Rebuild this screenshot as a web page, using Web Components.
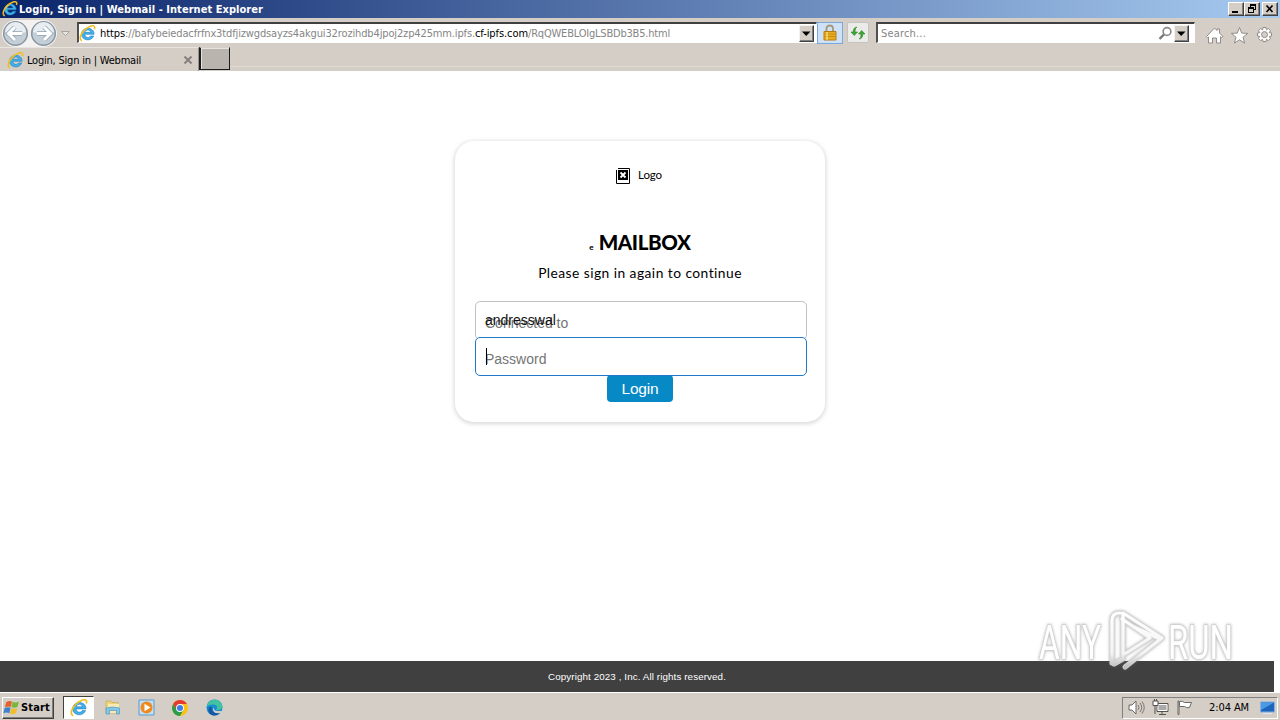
<!DOCTYPE html>
<html lang="en">
<head>
<meta charset="utf-8">
<title>Login, Sign in | Webmail</title>
<style>
  html, body {
    margin: 0;
    height: 100%;
    overflow: hidden;
  }

  body {
    width: 1280px;
    height: 720px;
    display: flex;
    flex-direction: column;
    background: #fff;
    --face: #d4cec7;
    --ui-font: "DejaVu Sans Condensed", "DejaVu Sans", sans-serif;
  }
</style>
</head>
<body>
<title-bar>Login, Sign in | Webmail - Internet Explorer</title-bar>
<nav-bar></nav-bar>
<tab-strip>Login, Sign in | Webmail</tab-strip>
<web-page>
  <login-card>
    <text-field value="andresswal" label="Connected to"></text-field>
    <text-field label="Password" focused></text-field>
  </login-card>
</web-page>
<task-bar></task-bar>
<any-watermark></any-watermark>

<template id="title-bar">
  <style>
    :host {
      display: flex;
      align-items: center;
      flex: none;
      height: 18px;
      box-sizing: border-box;
      padding: 0 2px 1px;
      background: linear-gradient(90deg, #0a246a, #a6caf0);
      color: #fff;
      font: bold 11px var(--ui-font);
    }
    .title { flex: 1; padding: 2px 0 0 1px; }
    .buttons { display: flex; padding-top: 1px; }
    button {
      width: 16px;
      height: 14px;
      padding: 0;
      border: 1px solid;
      border-color: #fff #404040 #404040 #fff;
      box-shadow: inset -1px -1px #808080;
      background: var(--face);
      display: flex;
    }
    button:last-child { margin-left: 2px; }
  </style>
  <ui-icon name="ie" size="16"></ui-icon>
  <div class="title"><fit-text width="244"><slot></slot></fit-text></div>
  <div class="buttons">
    <button><ui-icon name="minimize" size="14" height="12"></ui-icon></button>
    <button><ui-icon name="restore" size="14" height="12"></ui-icon></button>
    <button><ui-icon name="close" size="14" height="12"></ui-icon></button>
  </div>
</template>

<template id="nav-bar">
  <style>
    :host {
      display: flex;
      align-items: flex-start;
      flex: none;
      height: 29px;
      box-sizing: border-box;
      padding: 2px 6px 0 2px;
      background: var(--face);
      font: 11px var(--ui-font);
      color: #858585;
    }
    .arrows {
      display: flex;
      height: 27px;
      border-radius: 14px;
      background: #f3f2f0;
    }
    .chevron { padding: 9px 6px 0 4px; }
    .box {
      display: flex;
      align-items: center;
      box-sizing: border-box;
      height: 21px;
      margin-top: 2px;
      background: #fff;
      border: 1px solid #fff;
      border-top: 2px solid #404040;
      border-left: 2px solid #505050;
    }
    .address { width: 740px; margin-left: 1px; }
    .address ui-icon { margin: 0 4px 0 0; }
    .url { flex: 1; display: flex; padding-top: 1px; }
    b { font-weight: normal; color: #000; }
    .drop {
      width: 15px;
      height: 17px;
      box-sizing: border-box;
      border: 1px solid;
      border-color: #f4f2ee #404040 #404040 #f4f2ee;
      box-shadow: inset -1px -1px #808080;
      background: var(--face);
      display: flex;
    }
    .address .drop { margin-right: 2px; }
    .tool {
      display: flex;
      align-items: center;
      justify-content: center;
      box-sizing: border-box;
      width: 22px;
      height: 21px;
      margin: 2px 0 0 7px;
      border: 1px solid #c4c3bf;
      border-radius: 2px;
      background: #ebebe9;
    }
    .lock {
      width: 26px;
      height: 22px;
      margin-left: 0;
      border-color: #78a8dc;
      border-radius: 0;
      background: #cfe1f6;
    }
    .search { width: 319px; margin-left: 7px; }
    .search .hint { flex: 1; padding: 1px 0 0 3px; }
    .search .drop { margin-right: 5px; margin-left: 1px; }
    .commands {
      display: flex;
      flex: 1;
      justify-content: flex-end;
      gap: 6px;
      padding-top: 6px;
    }
  </style>
  <div class="arrows">
    <ui-icon name="back" size="27"></ui-icon>
    <ui-icon name="forward" size="28" height="27"></ui-icon>
  </div>
  <div class="chevron"><ui-icon name="chevron" size="9"></ui-icon></div>
  <div class="box address">
    <ui-icon name="ie" size="17"></ui-icon>
    <div class="url">
      <fit-text width="25"><b>https</b></fit-text><fit-text width="350">://bafybeiedacfrfnx3tdfjizwgdsayzs4akgui32rozihdb4jpoj2zp425mm.ipfs.</fit-text><fit-text width="53"><b>cf-ipfs.com</b></fit-text><fit-text width="142">/RqQWEBLOIgLSBDb3B5.html</fit-text>
    </div>
    <div class="drop"><ui-icon name="down" size="13" height="15"></ui-icon></div>
  </div>
  <div class="tool lock"><ui-icon name="lock" size="16" height="18"></ui-icon></div>
  <div class="tool" style="margin-left: 4px"><ui-icon name="refresh" size="16"></ui-icon></div>
  <div class="box search">
    <div class="hint"><fit-text width="45">Search...</fit-text></div>
    <ui-icon name="magnifier" size="15"></ui-icon>
    <div class="drop"><ui-icon name="down" size="13" height="15"></ui-icon></div>
  </div>
  <div class="commands">
    <ui-icon name="home" size="19"></ui-icon>
    <ui-icon name="star" size="19"></ui-icon>
    <ui-icon name="gear" size="19"></ui-icon>
  </div>
</template>

<template id="tab-strip">
  <style>
    :host {
      display: flex;
      flex: none;
      height: 24px;
      background: var(--face);
      font: 11px var(--ui-font);
      color: #000;
    }
    .tab {
      display: flex;
      align-items: center;
      box-sizing: border-box;
      width: 199px;
      padding: 1px 5px 0 7px;
      gap: 3px;
      border-top: 1px solid #e8e5e1;
      border-right: 1px solid #9a948e;
    }
    .label { flex: 1; }
    .new {
      box-sizing: border-box;
      width: 31px;
      height: 23px;
      border: solid #1c1c1c;
      border-width: 1px 1px 1px 2px;
      border-top-color: #d4d0c8;
      box-shadow: inset 1px 1px #e7e4df;
      background: #bab4af;
    }
    .rest { flex: 1; display: flex; align-items: flex-end; }
    .rest::after {
      content: "";
      flex: 1;
      height: 4px;
      border-top: 1px solid #dedad5;
    }
  </style>
  <div class="tab">
    <ui-icon name="ie" size="17"></ui-icon>
    <div class="label"><fit-text width="114"><slot></slot></fit-text></div>
    <ui-icon name="tabclose" size="10"></ui-icon>
  </div>
  <div class="new"></div>
  <div class="rest"></div>
</template>

<template id="web-page">
  <style>
    :host {
      display: flex;
      flex-direction: column;
      flex: 1;
      min-height: 0;
      background: #fff;
    }
    main {
      display: flex;
      justify-content: center;
      align-items: flex-start;
      flex: 1;
      padding-top: 70px;
    }
    footer {
      width: 1274px;
      height: 31px;
      line-height: 31px;
      text-align: center;
      background: #404040;
      color: #fff;
      font-family: "Liberation Sans", sans-serif;
      font-size: 9.8px;
    }
  </style>
  <main><slot></slot></main>
  <footer><fit-text width="178">Copyright 2023 , Inc. All rights reserved.</fit-text></footer>
</template>

<template id="login-card">
  <style>
    :host {
      display: flex;
      flex-direction: column;
      align-items: center;
      box-sizing: border-box;
      width: 370px;
      height: 281px;
      border-radius: 19px;
      box-shadow: 0 1px 4px 1px rgba(0, 0, 0, .15);
      background: #fff;
      color: #000;
      font-family: Lato, "Open Sans", sans-serif;
    }
    .logo {
      display: flex;
      align-items: center;
      gap: 7px;
      height: 17px;
      margin: 26px 2px 0 0;
      font-size: 11.5px;
    }
    .logo fit-text { padding-bottom: 3px; }
    h1 {
      display: flex;
      align-items: baseline;
      gap: 5px;
      margin: 46px 0 0;
      height: 24px;
      font-size: 20.5px;
      font-weight: 900;
      line-height: 24px;
    }
    small { font-size: 8px; }
    p {
      margin: 10px 0 19px;
      font-size: 13.8px;
      line-height: 18px;
    }
    button {
      width: 66px;
      height: 27px;
      margin-top: -1px;
      padding: 1px 0 0;
      border: 0;
      border-radius: 4px;
      background: #0689c4;
      color: #fff;
      font: 15.5px "Liberation Sans", sans-serif;
    }
  </style>
  <div class="logo"><ui-icon name="broken" size="15" height="17"></ui-icon><fit-text width="24">Logo</fit-text></div>
  <h1><small>e</small><fit-text width="92">MAILBOX</fit-text></h1>
  <p><fit-text width="204">Please sign in again to continue</fit-text></p>
  <slot></slot>
  <button><fit-text width="37">Login</fit-text></button>
</template>

<template id="text-field">
  <style>
    :host {
      display: block;
      position: relative;
      box-sizing: border-box;
      width: 332px;
      height: 39px;
      margin-left: 2px;
      border: 1px solid #c2c2c2;
      border-radius: 5px;
      background: #fff;
      font: 14px/16px "Liberation Sans", sans-serif;
    }
    :host([focused]) {
      margin-top: -3px;
      border-color: #1f78c8;
    }
    span { position: absolute; left: 9px; white-space: nowrap; }
    .label { top: 13px; color: #757575; }
    .value { top: 10px; color: #111; }
    :host([focused]) .caret {
      position: absolute;
      left: 10px;
      top: 10px;
      width: 1px;
      height: 17px;
      background: #000;
    }
  </style>
  <span class="label"></span>
  <span class="value"></span>
  <div class="caret"></div>
</template>

<template id="task-bar">
  <style>
    :host {
      display: flex;
      align-items: center;
      flex: none;
      box-sizing: border-box;
      height: 28px;
      padding: 2px 2px 0 2px;
      border-top: 1px solid #fff;
      background: var(--face);
      color: #000;
      font: 11px var(--ui-font);
    }
    .start {
      display: flex;
      align-items: center;
      box-sizing: border-box;
      width: 52px;
      height: 22px;
      gap: 1px;
      border: 1px solid;
      border-color: #fff #404040 #404040 #fff;
      box-shadow: inset -1px -1px #808080;
      font-weight: bold;
    }
    .apps { display: flex; flex: 1; align-items: center; padding-left: 9px; }
    .app {
      display: flex;
      align-items: center;
      justify-content: center;
      box-sizing: border-box;
      width: 34px;
      height: 23px;
    }
    .active {
      width: 31px;
      background: #fff;
      border: 1px solid;
      border-color: #404040 #fff #fff #404040;
    }
    .tray {
      display: flex;
      align-items: center;
      box-sizing: border-box;
      width: 156px;
      height: 22px;
      padding: 0 1px 0 5px;
      gap: 7px;
      border: 1px solid;
      border-color: #808080 #fff #fff #808080;
    }
    .clock { flex: 1; padding-left: 9px; }
  </style>
  <div class="start"><ui-icon name="windows" size="17"></ui-icon><fit-text width="29">Start</fit-text></div>
  <div class="apps">
    <div class="app active"><ui-icon name="ie" size="18"></ui-icon></div>
    <div class="app" style="margin-left: 1px"><ui-icon name="folder" size="17"></ui-icon></div>
    <div class="app"><ui-icon name="player" size="17"></ui-icon></div>
    <div class="app"><ui-icon name="chrome" size="16"></ui-icon></div>
    <div class="app"><ui-icon name="edge" size="17"></ui-icon></div>
  </div>
  <div class="tray">
    <ui-icon name="speaker" size="17"></ui-icon>
    <ui-icon name="network" size="17"></ui-icon>
    <ui-icon name="flag" size="17"></ui-icon>
    <div class="clock"><fit-text width="40">2:04 AM</fit-text></div>
    <ui-icon name="desktop" size="17"></ui-icon>
  </div>
</template>

<template id="any-watermark">
  <style>
    :host {
      position: absolute;
      left: 1030px;
      top: 602px;
      width: 240px;
      height: 76px;
    }
    svg { display: block; }
    text {
      font: 49px Roboto, sans-serif;
      fill: #fff;
      stroke: #cfcfcf;
      stroke-width: 1.6;
      paint-order: stroke;
    }
  </style>
  <svg width="240" height="76" viewBox="0 0 240 76">
    <defs>
      <filter id="soft" x="-10%" y="-20%" width="120%" height="140%">
        <feDropShadow dx="0" dy="0" stdDeviation="1.8" flood-color="#777" flood-opacity=".6"/>
      </filter>
      <linearGradient id="fade" gradientUnits="userSpaceOnUse" x1="0" y1="8" x2="0" y2="70">
        <stop offset="0" stop-color="#fff"/>
        <stop offset=".7" stop-color="#f4f4f4"/>
        <stop offset="1" stop-color="#aaa"/>
      </linearGradient>
      <path id="play" d="M82 61V18q0-7 8-7M84 62l9-5M93 54V11L132 36 95 65M92 17L120 36 93 53M104 25l24 11"/>
    </defs>
    <g filter="url(#soft)">
      <text x="9" y="57" textLength="62" lengthAdjust="spacingAndGlyphs">ANY</text>
      <text x="138" y="57" textLength="65" lengthAdjust="spacingAndGlyphs">RUN</text>
      <g fill="none" stroke-linejoin="round" stroke-linecap="round">
        <use href="#play" stroke="#d2d2d2" stroke-width="5"/>
        <use href="#play" stroke="url(#fade)" stroke-width="3.2"/>
      </g>
    </g>
  </svg>
</template>

<script>
(function(){
  // Each entry is [viewBox, markup]
  var icons = {
    ie: ['0 0 16 16', '<path d="M14.2 8.8H5.5c.1 3.2 4.1 3.9 5.3 1.5h3.1C11.600 16 2.400 15 2.400 8.500c0-6.800 11.800-7.700 11.800.3zM5.600 6.900h5.300C10.600 4 6 4 5.600 6.900z" fill="#42b0ea" stroke="#1978bd" stroke-width=".5"/><path d="M2.800 14.900C-1.500 13 3.500 4.500 9 2c4.500-2.500 6.600-1.300 5.400 2" fill="none" stroke="#f0bd20" stroke-width="1.500"/>'],
    minimize: ['0 0 14 12', '<path d="M3 8h6v2H3z"/>'],
    restore: ['0 0 14 12', '<path d="M5 1h6v6H9V6h1V3H6v1H5zM3 4h6v6H3zm1 2v3h4V6z" fill-rule="evenodd"/>'],
    close: ['0 0 14 12', '<path d="M3.500 2.500l6 6.500M9.500 2.500L3.500 9" stroke="#000" stroke-width="1.700"/>'],
    back: ['0 0 27 27', '<circle cx="13.500" cy="13.500" r="11.800" fill="#c4ced6" stroke="#8995a0" stroke-width="1.500"/><path d="M3 12a10.500 10 0 0 1 21 0q-10 4-21 0z" fill="#e7edf1"/><path d="M13 7l-6.500 6.500L13 20M7 13.500h13" fill="none" stroke="#8fa2b2" stroke-width="4.500"/><path d="M13 7l-6.500 6.500L13 20M7 13.500h13" fill="none" stroke="#fff" stroke-width="3"/>'],
    forward: ['0 0 28 27', '<circle cx="14.500" cy="13.500" r="11.800" fill="#c4ced6" stroke="#8995a0" stroke-width="1.500"/><path d="M4 12a10.500 10 0 0 1 21 0q-10 4-21 0z" fill="#e7edf1"/><path d="M15 7l6.500 6.500L15 20M21 13.500H8" fill="none" stroke="#8fa2b2" stroke-width="4.500"/><path d="M15 7l6.500 6.500L15 20M21 13.500H8" fill="none" stroke="#fff" stroke-width="3"/>'],
    chevron: ['0 0 9 9', '<path d="M.5 2.500h8l-4 4z" fill="#e9e7e4" stroke="#aaa5a0"/>'],
    down: ['0 0 13 15', '<path d="M2 5.500h8.500L6.200 10z"/>'],
    lock: ['0 0 16 18', '<path d="M4.500 8V4.500C4.500.5 11 .5 11 4.500V8" fill="none" stroke="#a49a78" stroke-width="1.800"/><path d="M2 7.500h12V16H2z" fill="#e7ae25" stroke="#b67d0e"/><path d="M2.500 10h11M2.500 12.500h11" stroke="#c78c14"/><path d="M5 8v8" stroke="#f9d864" stroke-width="1.500"/>'],
    refresh: ['0 0 16 16', '<path d="M7 2q-2 1-2 4v1h2.500L4.300 10.500 1 7h2.300Q3 2.500 7 2zM9 14q2-1 2-4V9H8.500l3.200-3.500L15 9h-2.300Q13 13.500 9 14z" fill="#3aa833" stroke="#2b8426" stroke-width=".6"/>'],
    magnifier: ['0 0 15 15', '<circle cx="9" cy="5.500" r="3.900" fill="#fff" stroke="#888" stroke-width="1.600"/><path d="M6 8.500l-4.500 4.300" stroke="#777" stroke-width="2.400"/>'],
    home: ['0 0 19 19', '<path d="M1.500 10.500L9.500 2l2.500 2.500V3h2.500v4L18 10.500l-1.500 1-1-.8V17h-4v-5h-4v5h-4v-6l-1 .7z" fill="#fff" stroke="#918c88"/>'],
    star: ['0 0 19 19', '<path d="M9.500 1.500l2.200 5.600 6 .3-4.700 3.800 1.600 5.900-5.100-3.300-5.100 3.300L6 11.200 1.300 7.400l6-.3z" fill="#fff" stroke="#918c88"/>'],
    gear: ['0 0 19 19', '<path d="M8 1.500h3l.4 2.300 1.900-1.300 2.200 2.200-1.300 1.900 2.300.4v3l-2.300.5 1.300 1.900-2.200 2.200-1.900-1.300-.4 2.300H8l-.4-2.300-1.900 1.300-2.200-2.200 1.300-1.900-2.300-.5V7l2.300-.4-1.300-1.900 2.200-2.200 1.900 1.300z" fill="#fff" stroke="#918c88"/><circle cx="9.500" cy="8.600" r="3" fill="#d4cec7" stroke="#918c88"/>'],
    tabclose: ['0 0 10 10', '<path d="M1.500 1.500l7 7M8.500 1.500l-7 7" stroke="#85807b" stroke-width="2"/>'],
    broken: ['0 0 15 17', '<path d="M.5 3V16.500h13V1.500H2" fill="#fff" stroke="#000"/><path d="M2 3h10v10H2z"/><path d="M4.500 5.500l5 5M9.500 5.500l-5 5" stroke="#fff" stroke-width="1.800"/>'],
    windows: ['0 0 16 16', '<path d="M3 3q3-2 5.500-.7L7.300 7.500Q5 6.500 1.800 7.800z" fill="#e4632c"/><path d="M9 2.700q3 1.300 6-.4l-1.300 5q-3 1.500-5.800.4z" fill="#7ab63d"/><path d="M1.600 8.500q3-1.300 5.500-.2L6 13.300Q3 12 .3 13.500z" fill="#3c83cf"/><path d="M7.700 8.700q3 1.200 5.800-.3l-1.300 5q-3 1.500-5.700.3z" fill="#f2be2b"/>'],
    folder: ['0 0 17 17', '<path d="M2 2h5l1 1.500h6V14H2z" fill="#ecd37c" stroke="#c9a94f" stroke-width=".7"/><path d="M4 5h11v9H4z" fill="#f8eab0"/><path d="M2 9q6.500-2 13.500 0v6h-3v-3.500h-7V15H2z" fill="#83c5e3" stroke="#4d9cc5" stroke-width=".7"/>'],
    player: ['0 0 17 17', '<path d="M1 1h15v15H1z" fill="#c3dff4" stroke="#5b9bd0"/><circle cx="8.500" cy="8.500" r="6" fill="#ee8a1d"/><path d="M6.500 4.800v7.400l6-3.700z" fill="#fff"/>'],
    chrome: ['0 0 16 16', '<circle cx="8" cy="8" r="8" fill="#fbc116"/><path d="M1.100 4A8 8 0 0 1 14.900 4H8L4.500 10z" fill="#e23c30"/><path d="M1.100 4A8 8 0 0 0 8 16l3.500-6H4.600z" fill="#2a9d4b"/><circle cx="8" cy="8" r="3.900" fill="#fff"/><circle cx="8" cy="8" r="3" fill="#3c7de6"/>'],
    edge: ['0 0 17 17', '<circle cx="8.500" cy="8.500" r="8" fill="#168bd2"/><path d="M.8 7.500C2-1.500 16-1.500 16.500 7.500c.3 3-3.500 4.300-6.500 3 2.500-2 .5-5-3-5-3 0-5 1-6.200 2z" fill="#43c1a0"/><path d="M6 8.500c-1 4 3.500 6.500 8.500 4.500-4 6.500-13 3-12-3 .3-2 2-3 3.500-1.500z" fill="#1459a5"/><path d="M8 8q-1 4 4 4h4l-1 2q-8 1.500-8-4z" fill="#d4cec7"/>'],
    speaker: ['0 0 17 17', '<path d="M1 6h3l4-4v13l-4-4H1z" fill="#fff" stroke="#6b6762"/><path d="M10 6q2 2.500 0 5M12 4q3.500 4.500 0 9M14 2.500q4.500 6 0 12" fill="none" stroke="#77736e"/>'],
    network: ['0 0 17 17', '<path d="M5 4.500h11v8H5z" fill="#aaa" stroke="#56524e"/><path d="M6 5.500h9v6H6z" fill="none" stroke="#fff"/><path d="M10 13v2M7 15.500h7M3 6v9" stroke="#56524e"/><path d="M1 2h5v4.500H1zM2.500 0v2M4.500 0v2" fill="#fff" stroke="#56524e"/>'],
    flag: ['0 0 17 17', '<path d="M2 2h1v13.500H2z" fill="#fff" stroke="#6b6762"/><path d="M3.500 2.500q3-1 5 1h7l-2 5q-3 1-5-1h-5z" fill="#fff" stroke="#6b6762"/>'],
    desktop: ['0 0 17 17', '<path d="M1.500 3h14v10h-14z" fill="#1d64bc" stroke="#8bb0da"/><path d="M2 3.500h13L2 11z" fill="#4b9ae5"/><path d="M4 14.500h9" stroke="#dde8f5"/>']
  };

  // Plain elements only stamp their template
  function define(name, connected) {
    var template = document.getElementById(name);
    customElements.define(name, class extends HTMLElement {
      constructor() {
        super();
        this.attachShadow({ mode: 'open' });
        this.shadowRoot.appendChild(document.importNode(template.content, true));
      }

      connectedCallback() {
        if(connected) connected.call(this, this.shadowRoot);
      }
    });
  }

  class UiIcon extends HTMLElement {
    constructor() {
      super();
      this.attachShadow({ mode: 'open' });
    }

    connectedCallback() {
      var icon = icons[this.getAttribute('name')];
      var width = this.getAttribute('size');
      var height = this.getAttribute('height') || width;
      this.shadowRoot.innerHTML =
        '<style>:host { display: block; flex: none; } svg { display: block; }</style>' +
        '<svg width="' + width + '" height="' + height + '" viewBox="' + icon[0] + '">' + icon[1] + '</svg>';
    }
  }

  // Spreads its text over a given width with letter-spacing
  class FitText extends HTMLElement {
    constructor() {
      super();
      this.attachShadow({ mode: 'open' });
      this.shadowRoot.innerHTML =
        '<style>:host { display: inline-block; white-space: nowrap; }</style><slot></slot>';
    }

    connectedCallback() {
      var wanted = Number(this.getAttribute('width'));
      var nodes = this.shadowRoot.querySelector('slot').assignedNodes({ flatten: true });
      var length = nodes.map(function(n){ return n.textContent; }).join('').trim().length;
      var natural = this.getBoundingClientRect().width;
      if(length && natural) {
        this.style.letterSpacing = (wanted - natural) / length + 'px';
      }
    }
  }

  define('title-bar');
  define('nav-bar');
  define('tab-strip');
  define('web-page');
  define('login-card');
  define('text-field', function(root){
    root.querySelector('.label').textContent = this.getAttribute('label');
    root.querySelector('.value').textContent = this.getAttribute('value') || '';
  });
  define('task-bar');
  define('any-watermark');
  customElements.define('ui-icon', UiIcon);
  customElements.define('fit-text', FitText);
})();
</script>
</body>
</html>
